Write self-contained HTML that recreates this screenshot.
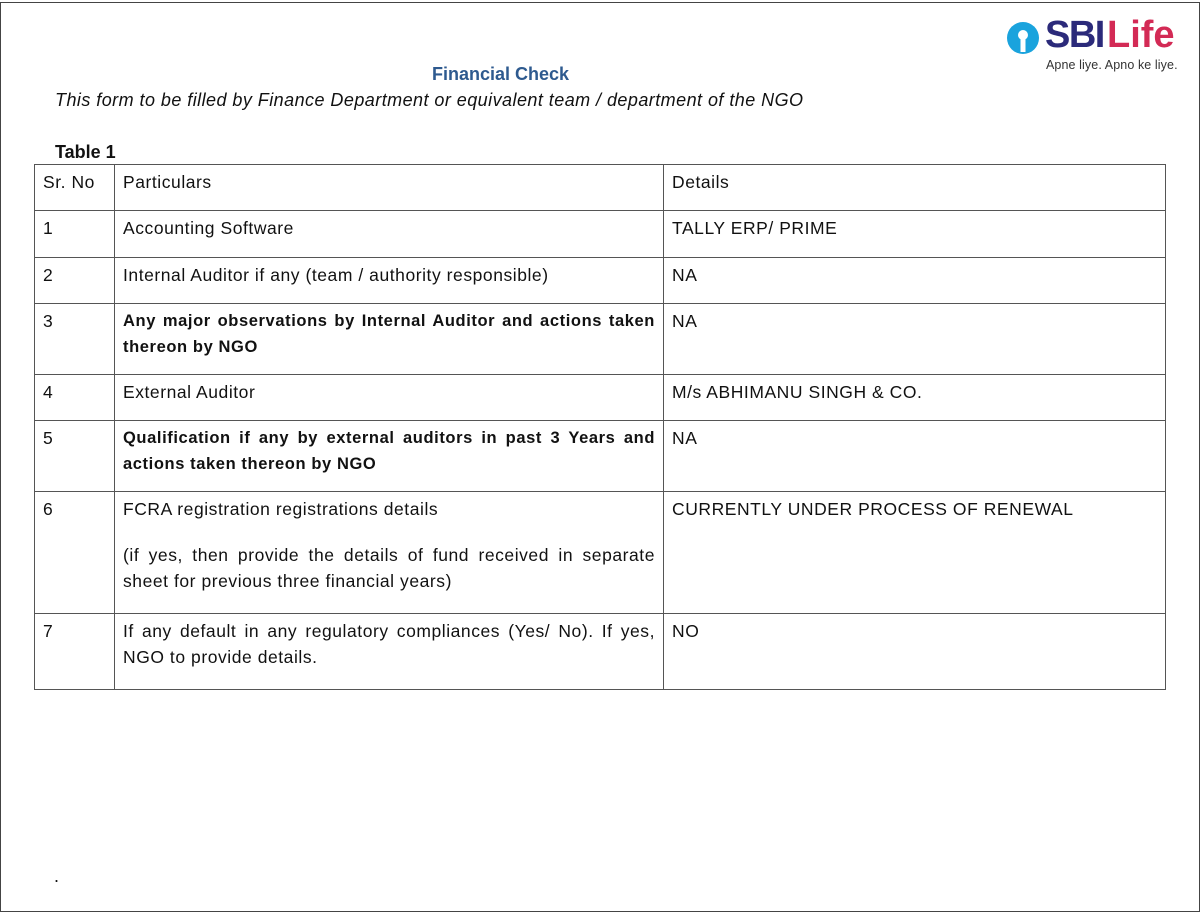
<!DOCTYPE html>
<html><head><meta charset="utf-8"><style>
body{margin:0;width:1200px;height:912px;position:relative;background:#fff;font-family:"Liberation Sans",sans-serif;color:#111;overflow:hidden}
.frame{position:absolute;left:0;top:2px;width:1198px;height:908px;border:1px solid #444}
.t{position:absolute;white-space:nowrap}
table{position:absolute;left:34px;top:164px;border-collapse:collapse;font-size:17.5px;letter-spacing:0.55px}
td{border:1px solid #555;vertical-align:top;padding:4px 8px 0 8px;line-height:26px}
p{margin:0;text-align:justify}
.b{font-weight:bold;font-size:16.5px;letter-spacing:0.6px}
</style></head><body>
<div class="frame"></div>
<div class="t" style="left:1006px;top:20px;">
<svg width="34" height="34" viewBox="0 0 34 34" style="position:absolute;left:0;top:1px"><circle cx="17" cy="17" r="16" fill="#1aa3dd"/><circle cx="17" cy="14" r="5" fill="#fff"/><rect x="14.5" y="16" width="5" height="15" fill="#fff"/></svg>
<span style="position:absolute;left:39px;top:-6px;font-size:38px;font-weight:bold;color:#2b2a7a;letter-spacing:-1.5px">SBI</span>
<span style="position:absolute;left:101px;top:-6px;font-size:38px;font-weight:bold;color:#d32a55;letter-spacing:0px">Life</span>
<span style="position:absolute;left:40px;top:38px;font-size:12.5px;color:#333;letter-spacing:0.1px">Apne liye. Apno ke liye.</span>
</div>
<div class="t" style="left:432px;top:64px;font-size:18px;font-weight:bold;color:#2e5a8f">Financial Check</div>
<div class="t" style="left:55px;top:90px;font-size:18px;font-style:italic;letter-spacing:0.45px">This form to be filled by Finance Department or equivalent team / department of the NGO</div>
<div class="t" style="left:55px;top:142px;font-size:18px;font-weight:bold">Table 1</div>
<table>
<tr style="height:46px"><td style="width:63px">Sr. No</td><td style="width:532px">Particulars</td><td style="width:485px">Details</td></tr>
<tr style="height:47px"><td>1</td><td>Accounting Software</td><td>TALLY ERP/ PRIME</td></tr>
<tr style="height:46px"><td>2</td><td>Internal Auditor if any (team / authority responsible)</td><td>NA</td></tr>
<tr style="height:71px"><td>3</td><td><p class="b">Any major observations by Internal Auditor and actions taken thereon by NGO</p></td><td>NA</td></tr>
<tr style="height:46px"><td>4</td><td>External Auditor</td><td>M/s ABHIMANU SINGH &amp; CO.</td></tr>
<tr style="height:71px"><td>5</td><td><p class="b">Qualification if any by external auditors in past 3 Years and actions taken thereon by NGO</p></td><td>NA</td></tr>
<tr style="height:122px"><td>6</td><td><p>FCRA registration registrations details</p><p style="margin-top:20px">(if yes, then provide the details of fund received in separate sheet for previous three financial years)</p></td><td>CURRENTLY UNDER PROCESS OF RENEWAL</td></tr>
<tr style="height:76px"><td>7</td><td><p>If any default in any regulatory compliances (Yes/ No). If yes, NGO to provide details.</p></td><td>NO</td></tr>
</table>
<div class="t" style="left:54px;top:866px;font-size:18px">.</div>
</body></html>
